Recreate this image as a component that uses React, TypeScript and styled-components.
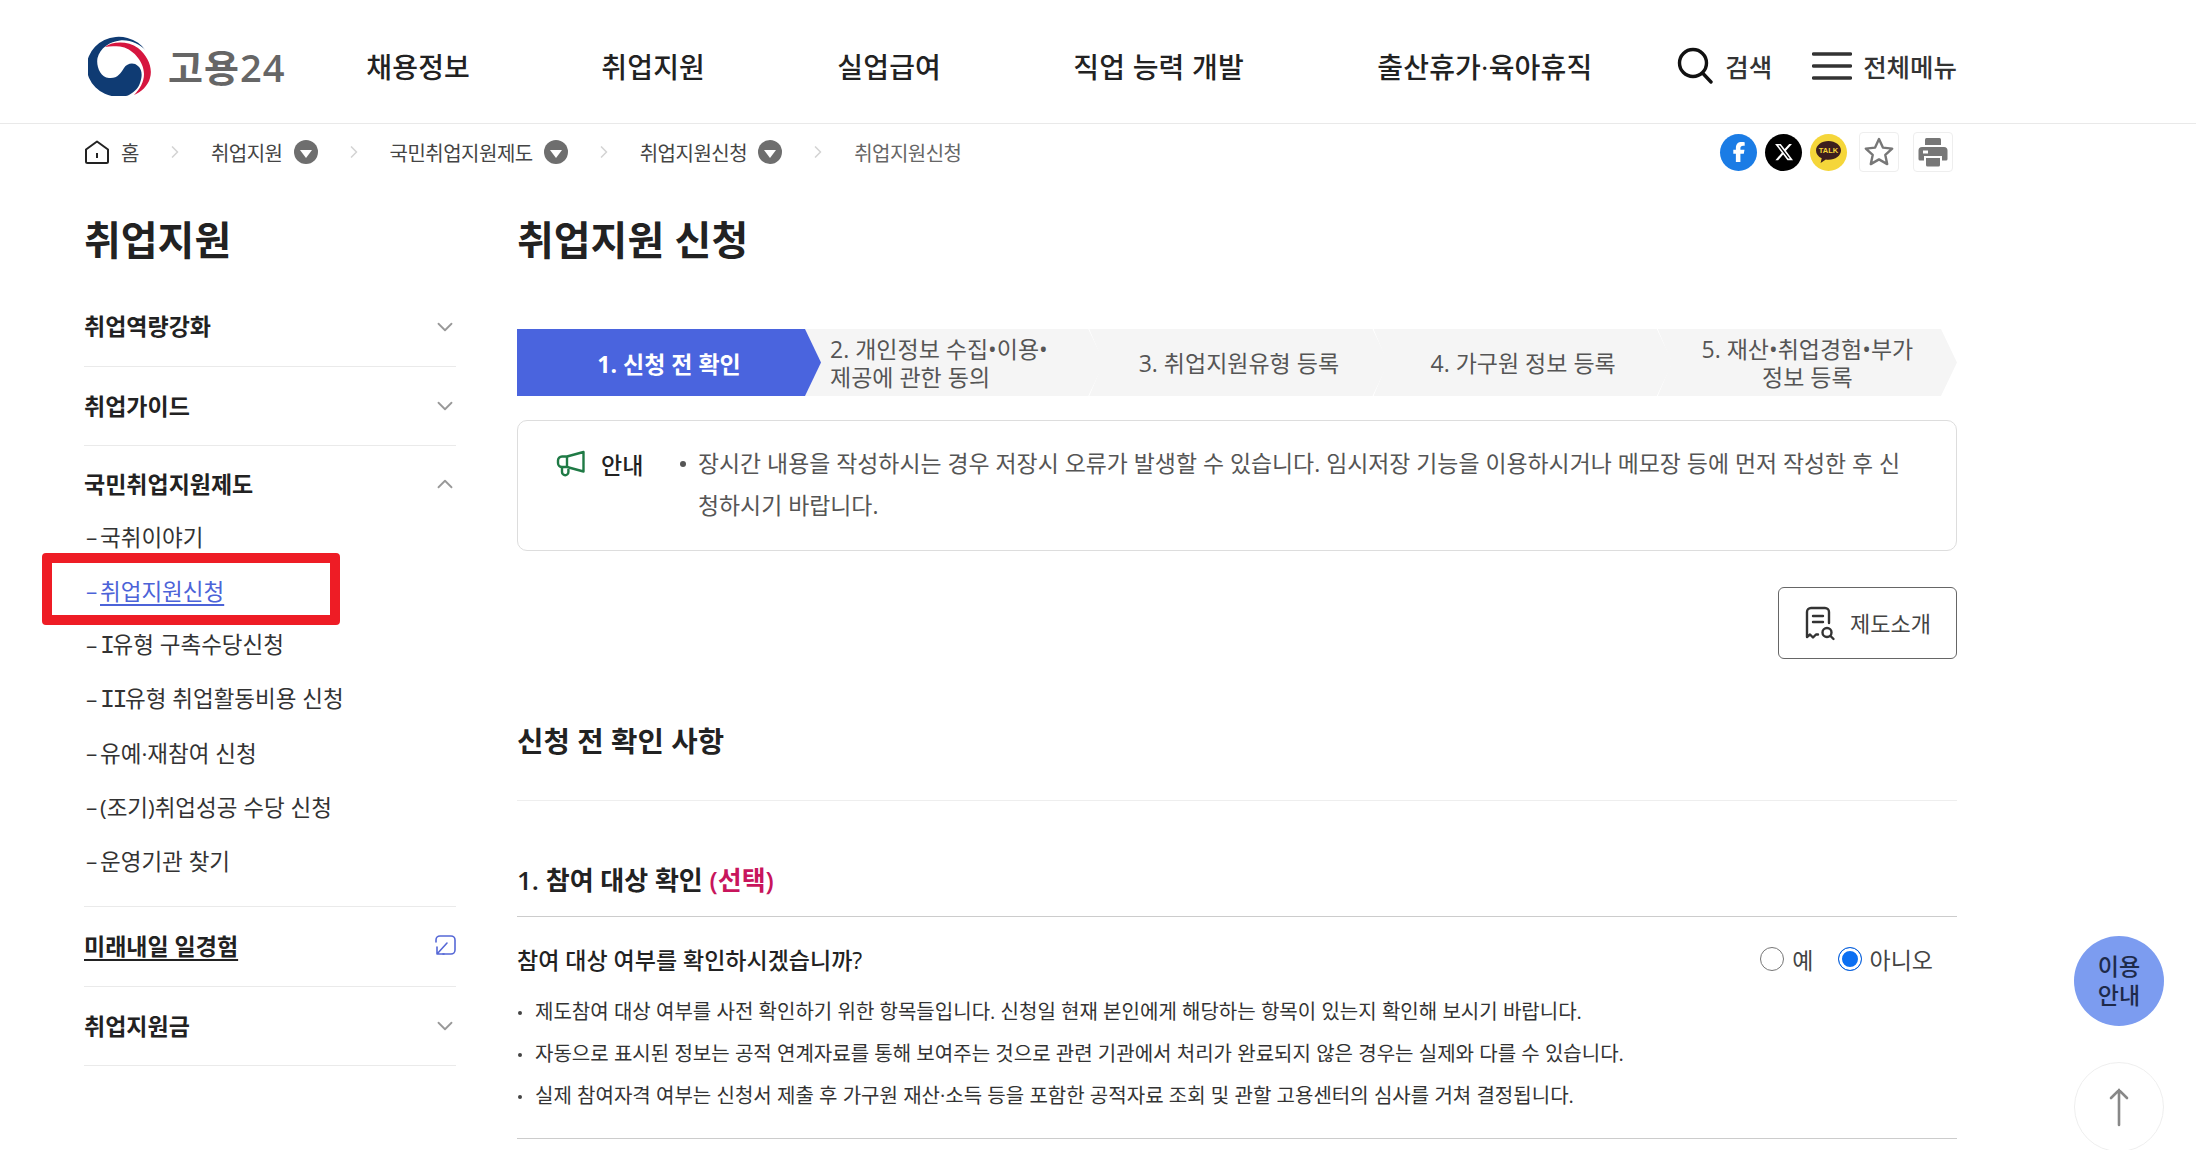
import React from "react";
import styled, { createGlobalStyle } from "styled-components";
import { ChevronDown, ChevronRight, ChevronUp } from "lucide-react";
import { FaFacebookF, FaXTwitter } from "react-icons/fa6";

const GlobalStyle = createGlobalStyle`
  html, body {
    margin: 0;
    height: 1150px;
    overflow: hidden;
    background: #fff;
    color: #222;
    font-family: "Open Sans", "Noto Sans CJK KR", sans-serif;
  }
  * { box-sizing: border-box; }
`;

const Header = styled.header`
  height: 124px;
  border-bottom: 1px solid #e9e9e9;
`;

const Inner = styled.div`
  width: 1873px;
  margin-left: 84px;
`;

const HeaderRow = styled(Inner)`
  height: 123px;
  padding-top: 8px;
  display: flex;
  align-items: center;
`;

const Logo = styled.a`
  display: flex;
  align-items: center;
  gap: 16px;
  width: 283px;
  padding-left: 4px;
  color: #666;
  font-size: 38px;
  font-weight: 600;
  letter-spacing: 1px;
`;

const Nav = styled.nav`
  display: flex;
  flex: 1;
`;

const NavItem = styled.a<{ $w: number }>`
  width: ${(p) => p.$w}px;
  font-size: 28px;
  font-weight: 500;
  letter-spacing: 0.2px;
  color: #222;
  white-space: nowrap;
`;

const HeaderAction = styled.a<{ $gap: number }>`
  display: flex;
  align-items: center;
  gap: ${(p) => p.$gap}px;
  font-size: 25.500px;
  font-weight: 500;
  color: #333;
  white-space: nowrap;
`;

const Actions = styled.div`
  display: flex;
  align-items: center;
  gap: 40px;
`;

const CrumbRow = styled(Inner)`
  height: 56px;
  display: flex;
  align-items: center;
  justify-content: space-between;
`;

const Crumbs = styled.ol`
  display: flex;
  align-items: center;
  margin: 0;
  padding: 0;
  list-style: none;
  font-size: 20px;
  color: #444;
`;

const Crumb = styled.li<{ $muted?: boolean }>`
  display: flex;
  align-items: center;
  gap: 11px;
  color: ${(p) => (p.$muted ? "#666" : "#444")};
  letter-spacing: -0.5px;
`;

const CrumbSep = styled(ChevronRight)`
  width: 20px;
  height: 20px;
  margin: 0 26px;
  color: #d4d4d4;
`;

const CrumbBadge = styled.span`
  width: 24px;
  height: 24px;
  border-radius: 50%;
  background: #6e6e6e;
  display: flex;
  align-items: center;
  justify-content: center;
  &::after {
    content: "";
    width: 0;
    height: 0;
    margin-top: 3px;
    border-left: 6px solid transparent;
    border-right: 6px solid transparent;
    border-top: 8px solid #fff;
  }
`;

const Shares = styled.div`
  display: flex;
  align-items: center;
  gap: 8px;
  padding-right: 4px;
`;

const ShareCircle = styled.a<{ $bg: string }>`
  width: 37px;
  height: 37px;
  border-radius: 50%;
  background: ${(p) => p.$bg};
  color: #fff;
  display: flex;
  align-items: center;
  justify-content: center;
`;

const ToolBox = styled.a<{ $first?: boolean }>`
  width: 40px;
  height: 40px;
  margin-left: ${(p) => (p.$first ? 4 : 6)}px;
  border: 1px solid #eee;
  border-radius: 4px;
  display: flex;
  align-items: center;
  justify-content: center;
`;

const Body = styled(Inner)`
  display: flex;
  align-items: flex-start;
`;

const Side = styled.aside`
  width: 372px;
  margin-right: 61px;
  flex-shrink: 0;
`;

const PageTitle = styled.h2<{ $h: number }>`
  margin: 0;
  height: ${(p) => p.$h}px;
  padding-top: 30px;
  font-size: 40px;
  line-height: 60px;
  font-weight: 600;
  color: #222;
`;

const SideHead = styled.a<{ $open?: boolean }>`
  display: flex;
  align-items: center;
  justify-content: space-between;
  height: ${(p) => (p.$open ? 63 : 79.5)}px;
  padding: ${(p) => (p.$open ? "11px 0 0" : "0 0 2px")};
  font-size: 23px;
  font-weight: 700;
  color: #222;
  border-bottom: ${(p) => (p.$open ? "none" : "1px solid #eaeaea")};
`;

const SideLinkText = styled.span`
  text-decoration: underline;
  text-underline-offset: 4px;
`;

const DownChevron = styled(ChevronDown)`
  width: 26px;
  height: 26px;
  margin: 3px -2px 0 0;
  color: #999;
  stroke-width: 1.700;
`;

const UpChevron = styled(ChevronUp)`
  width: 26px;
  height: 26px;
  margin: 2px -2px 0 0;
  color: #999;
  stroke-width: 1.700;
`;

const SubList = styled.ul`
  margin: 0 0 19px;
  padding: 0;
  list-style: none;
`;

const SubItem = styled.li<{ $active?: boolean }>`
  position: relative;
  height: 54px;
  display: flex;
  align-items: center;
  font-size: 22.500px;
  color: #333;
  white-space: nowrap;
  &::before {
    content: "–";
    width: 14px;
    padding-left: 2px;
    color: ${(p) => (p.$active ? "#4c63d8" : "#333")};
  }
  a {
    color: ${(p) => (p.$active ? "#4c63d8" : "#333")};
    text-decoration: ${(p) => (p.$active ? "underline" : "none")};
    text-underline-offset: 4px;
  }
`;

const Roman = styled.span`
  font-family: "Liberation Mono", monospace;
  font-size: 25px;
  letter-spacing: -2.500px;
`;

const SubEnd = styled.div`
  border-bottom: 1px solid #eaeaea;
`;

const Callout = styled.span`
  position: absolute;
  left: -42px;
  top: -10px;
  width: 298px;
  height: 72px;
  border: 10px solid #ee1c25;
  border-radius: 4px;
  pointer-events: none;
`;

const Main = styled.main`
  flex: 1;
  min-width: 0;
`;

const Steps = styled.ol`
  display: flex;
  height: 67px;
  margin: 0;
  padding: 0;
  list-style: none;
`;

const Step = styled.li<{ $left?: boolean }>`
  flex: 0 0 299.250px;
  margin-right: -15px;
  padding-left: ${(p) => (p.$left ? 25 : 0)}px;
  display: flex;
  align-items: center;
  justify-content: ${(p) => (p.$left ? "flex-start" : "center")};
  text-align: ${(p) => (p.$left ? "left" : "center")};
  font-size: 23px;
  line-height: 28px;
  color: #555;
  background: #f5f5f5;
  clip-path: polygon(0 0, calc(100% - 16px) 0, 100% 50%, calc(100% - 16px) 100%, 0 100%, 14px 50%);
  &:last-child { margin-right: 0; }
`;

const ActiveStep = styled.li`
  position: relative;
  z-index: 1;
  flex: 0 0 304px;
  margin-right: -16px;
  display: flex;
  align-items: center;
  justify-content: center;
  font-size: 23px;
  font-weight: 700;
  color: #fff;
  background: #4a64de;
  clip-path: polygon(0 0, calc(100% - 16px) 0, 100% 50%, calc(100% - 16px) 100%, 0 100%);
`;

const Notice = styled.div`
  margin-top: 24px;
  height: 131px;
  padding: 22px 36px 0 38px;
  border: 1px solid #ddd;
  border-radius: 10px;
  display: flex;
  align-items: flex-start;
`;

const NoticeLabel = styled.strong`
  display: flex;
  align-items: center;
  gap: 16px;
  width: 142px;
  height: 42px;
  flex-shrink: 0;
  font-size: 23px;
  font-weight: 500;
  color: #222;
`;

const NoticeText = styled.p`
  position: relative;
  margin: 0;
  font-size: 22.900px;
  line-height: 42px;
  color: #555;
  &::before {
    content: "";
    position: absolute;
    left: -18px;
    top: 18px;
    width: 6px;
    height: 6px;
    border-radius: 50%;
    background: #555;
  }
`;

const ButtonRow = styled.div`
  display: flex;
  justify-content: flex-end;
  margin-top: 36px;
`;

const IntroButton = styled.a`
  width: 179px;
  height: 72px;
  border: 1px solid #666;
  border-radius: 6px;
  display: flex;
  align-items: center;
  justify-content: center;
  gap: 14px;
  font-size: 22px;
  color: #444;
`;

const ButtonLabel = styled.span`
  margin-bottom: 3px;
`;

const SectionTitle = styled.h3`
  margin: 52px 0 0;
  height: 90px;
  border-bottom: 1px solid #eee;
  font-size: 28.700px;
  line-height: 60px;
  font-weight: 600;
  color: #222;
`;

const GroupTitle = styled.h4`
  margin: 49px 0 0;
  height: 67px;
  border-bottom: 1px solid #ccc;
  font-size: 26px;
  line-height: 60px;
  font-weight: 600;
  color: #222;
  em {
    font-style: normal;
    color: #c8155c;
  }
`;

const QuestionRow = styled.div`
  height: 71px;
  padding: 13px 24px 0 0;
  display: flex;
  align-items: center;
  justify-content: space-between;
`;

const Question = styled.span`
  font-size: 23px;
  font-weight: 500;
  color: #222;
`;

const Radios = styled.div`
  display: flex;
  gap: 24px;
`;

const RadioLabel = styled.label`
  display: flex;
  align-items: center;
  gap: 8px;
  font-size: 23px;
  color: #444;
`;

const RadioDot = styled.span<{ $checked?: boolean }>`
  width: 24px;
  height: 24px;
  border-radius: 50%;
  border: 1px solid ${(p) => (p.$checked ? "#0a5fd8" : "#767676")};
  background: ${(p) => (p.$checked ? "#0b6ff2" : "#fff")};
  box-shadow: ${(p) => (p.$checked ? "inset 0 0 0 3px #fff" : "none")};
`;

const Bullets = styled.ul`
  margin: 3px 0 0;
  padding: 0 0 21px;
  list-style: none;
  border-bottom: 1px solid #ccc;
`;

const Bullet = styled.li`
  position: relative;
  height: 42px;
  padding-left: 18px;
  font-size: 20.050px;
  line-height: 42px;
  color: #333;
  white-space: nowrap;
  &::before {
    content: "";
    position: absolute;
    left: 1px;
    top: 20px;
    width: 4px;
    height: 4px;
    border-radius: 50%;
    background: #444;
  }
`;

const FloatCircle = styled.a<{ $top: number; $light?: boolean }>`
  position: fixed;
  left: 2074px;
  top: ${(p) => p.$top}px;
  width: 90px;
  height: 90px;
  border-radius: 50%;
  display: flex;
  align-items: center;
  justify-content: center;
  text-align: center;
  font-size: 23px;
  line-height: 29px;
  font-weight: 500;
  color: #1e2a4a;
  background: ${(p) => (p.$light ? "#fff" : "#7c9cf0")};
  border: ${(p) => (p.$light ? "1px solid #eee" : "none")};
`;

const Taegeuk = () => (
  <svg width="64" height="60" viewBox="0 0 64 60">
    <path
      fill="#0f3b73"
      d="M40 59.500A32 30 0 1 1 58 15C52 8 42 3.500 32 4.500C22 5.500 12 12 9.500 22C8 30 12 41 21 42C29 43 33 37 36 32C39 27 46 26 50 30C55 34 54 42 52 47C50 53 45 57 40 59.500Z"
    />
    <path
      fill="#d6163f"
      d="M17 11C25 5 40 5 50 12C60 20 65 32 62 42C60 50 53 56 46 59C52 53 56 46 56 38C56 25 44 12 32 10.500C26 10 21 10 17 11Z"
    />
  </svg>
);

const HomeIcon = () => (
  <svg width="26" height="26" viewBox="0 0 26 26" fill="none" stroke="#222" strokeWidth="2">
    <path d="M2 10.500 13 2.500l11 8v12a1.500 1.500 0 0 1-1.500 1.500h-19A1.500 1.500 0 0 1 2 22.500z" strokeLinejoin="round" />
    <path d="M13 14v5" />
  </svg>
);

const SearchIcon = () => (
  <svg width="36" height="38" viewBox="0 0 36 38" fill="none" stroke="#111" strokeWidth="3.400">
    <circle cx="16" cy="16" r="13.500" />
    <path d="M26 26.500 34 35" strokeLinecap="round" />
  </svg>
);

const MenuIcon = () => (
  <svg width="40" height="30" viewBox="0 0 40 30" stroke="#333" strokeWidth="3.400" strokeLinecap="round">
    <path d="M1.500 3h37M1.500 15h37M1.500 27h37" />
  </svg>
);

const KakaoIcon = () => (
  <svg width="27" height="24" viewBox="0 0 27 24">
    <path fill="#3c1e1e" d="M13.500 1C6.600 1 1 5.200 1 10.400c0 3.300 2.300 6.200 5.700 7.900L5.600 23l5.200-3.500c.9.100 1.800.2 2.700.2 6.900 0 12.500-4.200 12.500-9.300S20.400 1 13.500 1z" />
    <text x="13.500" y="13.200" textAnchor="middle" fontSize="7.500" fontWeight="700" fill="#f5d63a" fontFamily="Liberation Sans, sans-serif">TALK</text>
  </svg>
);

const StarIcon = () => (
  <svg width="32" height="32" viewBox="0 0 32 32" fill="#fff" stroke="#777" strokeWidth="2.400" strokeLinejoin="round">
    <path d="M16 3l3.900 8.600 9.300 1-6.900 6.300 1.900 9.200L16 23.400l-8.200 4.700 1.900-9.200-6.900-6.300 9.300-1z" />
  </svg>
);

const PrintIcon = () => (
  <svg width="30" height="30" viewBox="0 0 30 30" fill="#777">
    <path d="M7 2.500A1.500 1.500 0 0 1 8.500 1h13A1.500 1.500 0 0 1 23 2.500V8H7z" />
    <path fillRule="evenodd" d="M4 10h22a3.500 3.500 0 0 1 3.500 3.500V22a1.500 1.500 0 0 1-1.500 1.500h-4V19H6v4.500H2A1.500 1.500 0 0 1 .5 22v-8.500A3.500 3.500 0 0 1 4 10zm1 3.500v3h5v-3z" />
    <path d="M8 21h14v7a1.500 1.500 0 0 1-1.500 1.500h-11A1.500 1.500 0 0 1 8 28z" />
  </svg>
);

const MegaphoneIcon = () => (
  <svg width="29" height="28" viewBox="0 0 29 28" fill="none" stroke="#1f7a45" strokeWidth="2.400" strokeLinejoin="round">
    <path d="M27.500 2v19.500L11 17H6a4 4 0 0 1-4-4V10.500a4 4 0 0 1 4-4h5z" />
    <path d="M11 6.500V17" />
    <path d="M6 17v5a3.200 3.200 0 0 0 6.400 0v-3" />
  </svg>
);

const GuideIcon = () => (
  <svg width="32" height="35" viewBox="0 0 32 35" fill="none" stroke="#333" strokeWidth="2.400" strokeLinecap="round" strokeLinejoin="round">
    <path d="M25 17V6a4 4 0 0 0-4-4H7a4 4 0 0 0-4 4v25l3-2.500 3 3 3-3h2" />
    <path d="M9 10h10M9 16h10" />
    <circle cx="23" cy="26.500" r="4.500" />
    <path d="M26.500 30l3 3" />
  </svg>
);

const ExternalIcon = () => (
  <svg width="22" height="22" viewBox="0 0 22 22" fill="none" stroke="#5668d6" strokeWidth="1.600" strokeLinecap="round" strokeLinejoin="round">
    <path d="M2 8V6a4 4 0 0 1 4-4h11a4 4 0 0 1 4 4v10a4 4 0 0 1-4 4H9" />
    <path d="M13 9l-10 11M3 13v7h7" />
  </svg>
);

const UpArrow = () => (
  <svg width="20" height="40" viewBox="0 0 20 40" fill="none" stroke="#888" strokeWidth="2.600" strokeLinecap="round">
    <path d="M10 38V3M2 11l8-8 8 8" />
  </svg>
);

const navItems: [string, number][] = [
  ["채용정보", 235],
  ["취업지원", 236],
  ["실업급여", 236],
  ["직업 능력 개발", 304],
  ["출산휴가·육아휴직", 300],
];

const subItems: React.ReactNode[] = [
  "국취이야기",
  "취업지원신청",
  <>
    <Roman>I</Roman>유형 구촉수당신청
  </>,
  <>
    <Roman>II</Roman>유형 취업활동비용 신청
  </>,
  "유예·재참여 신청",
  "(조기)취업성공 수당 신청",
  "운영기관 찾기",
];

const bullets = [
  "제도참여 대상 여부를 사전 확인하기 위한 항목들입니다. 신청일 현재 본인에게 해당하는 항목이 있는지 확인해 보시기 바랍니다.",
  "자동으로 표시된 정보는 공적 연계자료를 통해 보여주는 것으로 관련 기관에서 처리가 완료되지 않은 경우는 실제와 다를 수 있습니다.",
  "실제 참여자격 여부는 신청서 제출 후 가구원 재산·소득 등을 포함한 공적자료 조회 및 관할 고용센터의 심사를 거쳐 결정됩니다.",
];

export default function App() {
  return (
    <>
      <GlobalStyle />
      <Header>
        <HeaderRow>
          <Logo>
            <Taegeuk />
            고용24
          </Logo>
          <Nav>
            {navItems.map(([label, w]) => (
              <NavItem key={label} $w={w}>
                {label}
              </NavItem>
            ))}
          </Nav>
          <Actions>
            <HeaderAction $gap={12}>
              <SearchIcon />
              검색
            </HeaderAction>
            <HeaderAction $gap={11}>
              <MenuIcon />
              전체메뉴
            </HeaderAction>
          </Actions>
        </HeaderRow>
      </Header>

      <CrumbRow>
        <Crumbs>
          <Crumb>
            <HomeIcon />홈
          </Crumb>
          <CrumbSep />
          <Crumb>
            취업지원 <CrumbBadge />
          </Crumb>
          <CrumbSep />
          <Crumb>
            국민취업지원제도 <CrumbBadge />
          </Crumb>
          <CrumbSep />
          <Crumb>
            취업지원신청 <CrumbBadge />
          </Crumb>
          <CrumbSep />
          <Crumb $muted>취업지원신청</Crumb>
        </Crumbs>
        <Shares>
          <ShareCircle $bg="#1b7ce5">
            <FaFacebookF size={20} />
          </ShareCircle>
          <ShareCircle $bg="#000">
            <FaXTwitter size={20} />
          </ShareCircle>
          <ShareCircle $bg="#f5d63a">
            <KakaoIcon />
          </ShareCircle>
          <ToolBox $first>
            <StarIcon />
          </ToolBox>
          <ToolBox>
            <PrintIcon />
          </ToolBox>
        </Shares>
      </CrumbRow>

      <Body>
        <Side>
          <PageTitle $h={107}>취업지원</PageTitle>
          <SideHead>
            취업역량강화 <DownChevron />
          </SideHead>
          <SideHead>
            취업가이드 <DownChevron />
          </SideHead>
          <SideHead $open>
            국민취업지원제도 <UpChevron />
          </SideHead>
          <SubList>
            {subItems.map((s, i) => (
              <SubItem key={i} $active={i === 1}>
                <a>{s}</a>
                {i === 1 && <Callout />}
              </SubItem>
            ))}
          </SubList>
          <SubEnd />
          <SideHead>
            <SideLinkText>미래내일 일경험</SideLinkText> <ExternalIcon />
          </SideHead>
          <SideHead>
            취업지원금 <DownChevron />
          </SideHead>
        </Side>

        <Main>
          <PageTitle $h={149}>취업지원 신청</PageTitle>
          <Steps>
            <ActiveStep>1. 신청 전 확인</ActiveStep>
            <Step $left>
              2. 개인정보 수집•이용•
              <br />
              제공에 관한 동의
            </Step>
            <Step>3. 취업지원유형 등록</Step>
            <Step>4. 가구원 정보 등록</Step>
            <Step>
              5. 재산•취업경험•부가
              <br />
              정보 등록
            </Step>
          </Steps>
          <Notice>
            <NoticeLabel>
              <MegaphoneIcon />
              안내
            </NoticeLabel>
            <NoticeText>
              장시간 내용을 작성하시는 경우 저장시 오류가 발생할 수 있습니다. 임시저장 기능을 이용하시거나 메모장 등에 먼저 작성한 후 신청하시기 바랍니다.
            </NoticeText>
          </Notice>
          <ButtonRow>
            <IntroButton>
              <GuideIcon />
              <ButtonLabel>제도소개</ButtonLabel>
            </IntroButton>
          </ButtonRow>
          <SectionTitle>신청 전 확인 사항</SectionTitle>
          <GroupTitle>
            1. 참여 대상 확인 <em>(선택)</em>
          </GroupTitle>
          <QuestionRow>
            <Question>참여 대상 여부를 확인하시겠습니까?</Question>
            <Radios>
              <RadioLabel>
                <RadioDot />예
              </RadioLabel>
              <RadioLabel>
                <RadioDot $checked />아니오
              </RadioLabel>
            </Radios>
          </QuestionRow>
          <Bullets>
            {bullets.map((b) => (
              <Bullet key={b}>{b}</Bullet>
            ))}
          </Bullets>
        </Main>
      </Body>

      <FloatCircle $top={936}>
        이용
        <br />
        안내
      </FloatCircle>
      <FloatCircle $top={1062} $light>
        <UpArrow />
      </FloatCircle>
    </>
  );
}
